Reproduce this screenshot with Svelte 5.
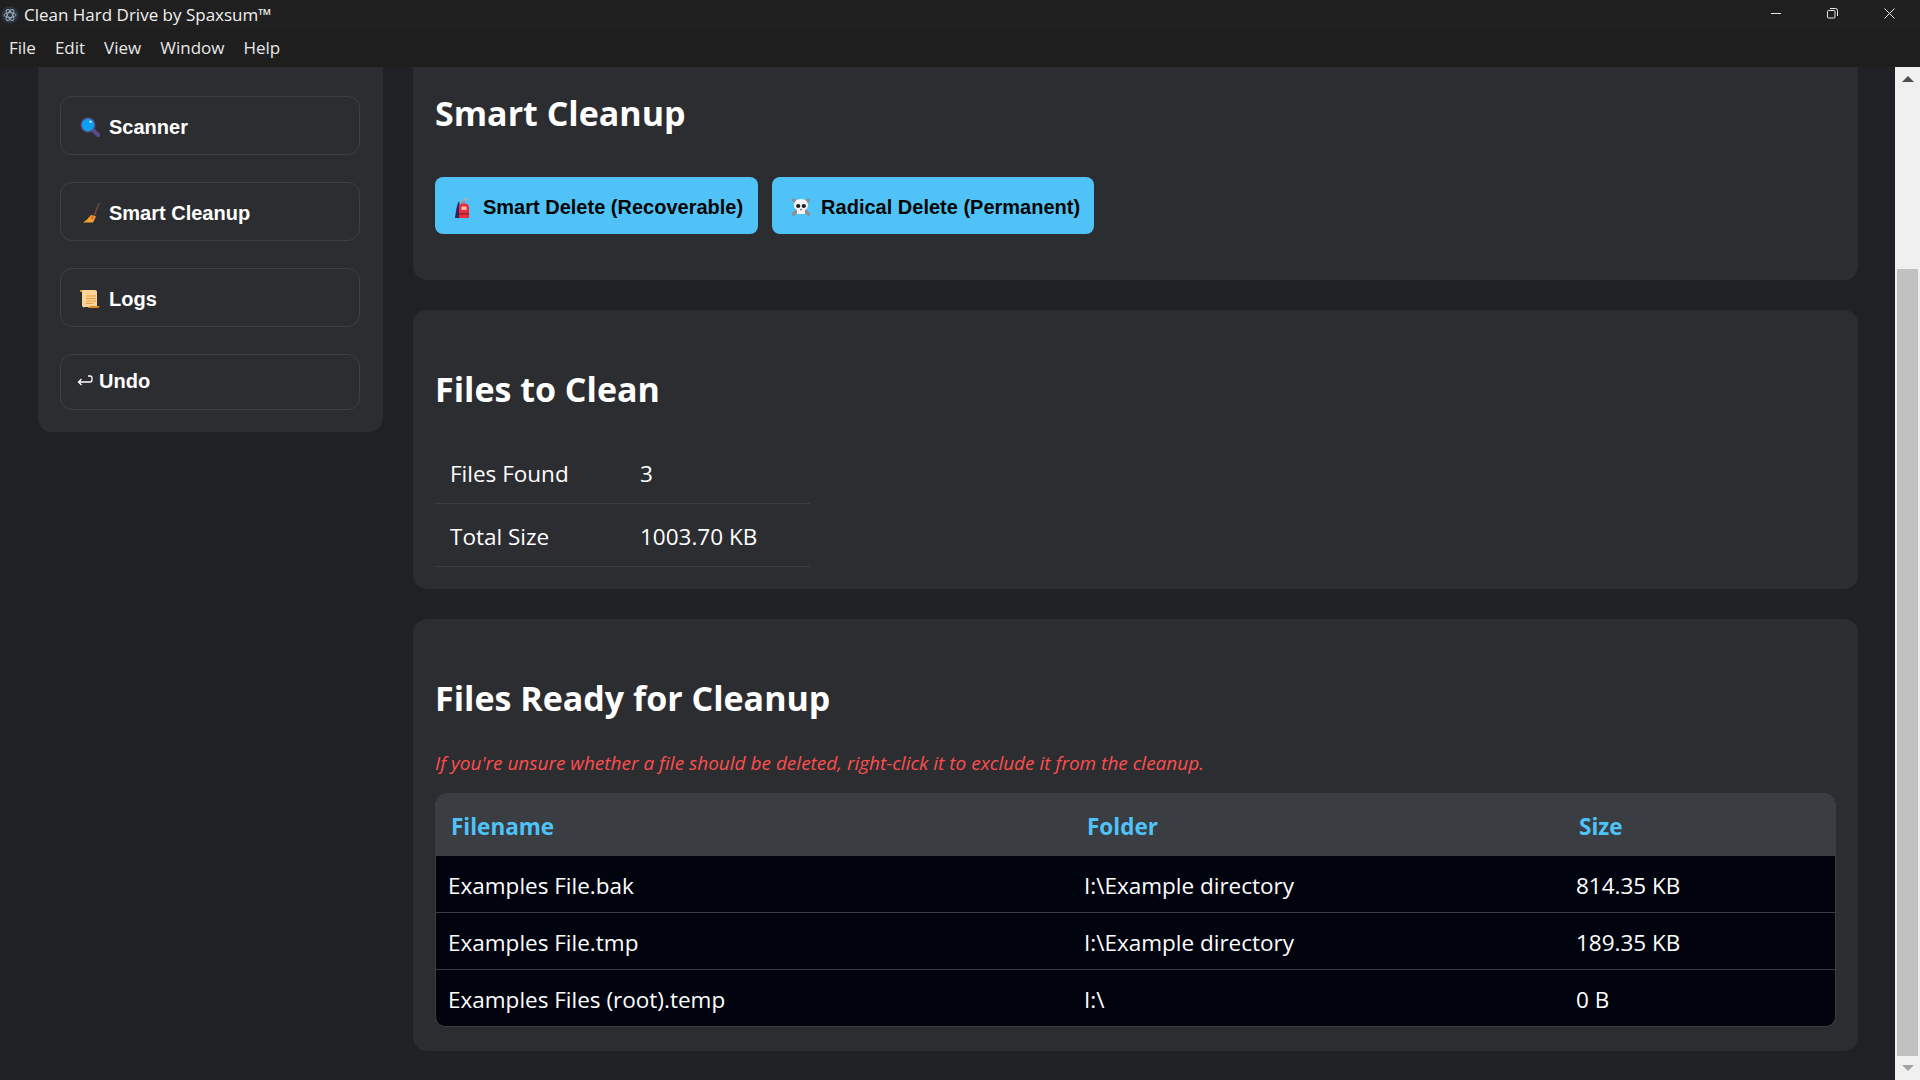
<script>
	const menus = ["File", "Edit", "View", "Window", "Help"];
	const stats = [
		{ label: "Files Found", value: "3" },
		{ label: "Total Size", value: "1003.70 KB" },
	];
	const files = [
		{ name: "Examples File.bak", folder: "I:\\Example directory", size: "814.35 KB" },
		{ name: "Examples File.tmp", folder: "I:\\Example directory", size: "189.35 KB" },
		{ name: "Examples Files (root).temp", folder: "I:\\", size: "0 B" },
	];
</script>

{#snippet scanIcon()}
	<svg class="icon" width="20" height="20" viewBox="0 0 20 20">
		<path d="M13 13l5 5" stroke="#5b4a8a" stroke-width="4" stroke-linecap="round" />
		<circle cx="8" cy="8" r="7.5" fill="#5b4a8a" />
		<circle cx="8" cy="8" r="6.2" fill="#0a9ff0" />
		<circle cx="10.5" cy="4.8" r="1.2" fill="#bfe6fb" />
	</svg>
{/snippet}

{#snippet broomIcon()}
	<svg class="icon" width="20" height="20" viewBox="0 0 20 20">
		<path d="M19 0.500L14 13" stroke="#6e4a3a" stroke-width="1.600" stroke-linecap="round" />
		<path d="M11 12l5 1.500-3 6H3l4-3z" fill="#f2a331" />
		<path d="M11.500 13l3 1-1.500 2.500-2.500-1z" fill="#e8692c" />
	</svg>
{/snippet}

{#snippet scrollIcon()}
	<svg class="icon" width="20" height="20" viewBox="0 0 20 20">
		<path d="M0 1h5v2H0z" fill="#e08b2c" />
		<path d="M2 1h13a2 2 0 0 1 2 2v15H5a2 2 0 0 1-3-2z" fill="#fcd497" />
		<path d="M8 19l2-2h10l-2 2z" fill="#e08b2c" />
		<path d="M6 7h10M6 9.5h10M6 12h10M6 14.5h7" stroke="#ee9c45" stroke-width="1" />
	</svg>
{/snippet}

{#snippet extinguisherIcon()}
	<svg class="icon" width="15" height="21" viewBox="0 0 15 21">
		<path d="M4 4C1.500 8 1 14 0 21h4.500V6z" fill="#262a63" />
		<path d="M5 3.500l8-3v2.200L7 5z" fill="#a8b3bb" />
		<rect x="6.500" y="3.500" width="3.500" height="3.500" fill="#8c969e" />
		<path d="M4 10.500A4 4 0 0 1 8 6.500h2a4 4 0 0 1 4 4V21H4z" fill="#ea2f3a" />
		<rect x="6.500" y="9.500" width="5" height="3.500" rx="0.500" fill="#f7bcc0" />
		<rect x="4" y="16" width="10" height="1.500" fill="#a81c28" />
	</svg>
{/snippet}

{#snippet skullIcon()}
	<svg class="icon" width="20" height="20" viewBox="0 0 20 20">
		<path d="M2.500 3l15 14M17.500 3l-15 14" stroke="#8f8f8f" stroke-width="3.500" stroke-linecap="round" />
		<path d="M10 2c4.500 0 7 2.800 7 6.200 0 2.300-1.200 4-3 4.800v4H6v-4c-1.800-.8-3-2.500-3-4.800C3 4.800 5.500 2 10 2z" fill="#f4f4f4" />
		<circle cx="7.200" cy="9" r="2.100" fill="#1c1c1c" />
		<circle cx="12.800" cy="9" r="2.100" fill="#1c1c1c" />
		<path d="M10 11.500l1 1.800H9z" fill="#444" />
	</svg>
{/snippet}

<div class="window">
	<header class="titlebar">
		<svg class="app-logo" width="18" height="18" viewBox="0 0 18 18">
			<circle cx="9" cy="9" r="8.500" fill="#2b3440" />
			<g fill="none" stroke="#93a7b5" stroke-width="1">
				<ellipse cx="9" cy="9" rx="6" ry="2.500" />
				<ellipse cx="9" cy="9" rx="6" ry="2.500" transform="rotate(60 9 9)" />
				<ellipse cx="9" cy="9" rx="6" ry="2.500" transform="rotate(120 9 9)" />
			</g>
		</svg>
		<span class="app-title">Clean Hard Drive by Spaxsum™</span>
		<div class="window-controls">
			<svg width="10" height="10" viewBox="0 0 10 10"><path d="M0 5.500h10" stroke="#e8e8e8" /></svg>
			<svg width="11" height="11" viewBox="0 0 11 11" fill="none" stroke="#e8e8e8">
				<rect x="0.500" y="2.500" width="7.500" height="7.500" rx="1" />
				<path d="M3 0.500h5.500a2 2 0 0 1 2 2V8" />
			</svg>
			<svg width="11" height="11" viewBox="0 0 11 11"><path d="M0.500 0.500l10 10M10.500 0.500l-10 10" stroke="#e8e8e8" /></svg>
		</div>
	</header>

	<nav class="menubar">
		{#each menus as menu}
			<span class="menu-item">{menu}</span>
		{/each}
	</nav>

	<div class="pane">
		<div class="scroller">
			<aside class="sidebar">
				<button class="nav-btn">{@render scanIcon()}<span>Scanner</span></button>
				<button class="nav-btn">{@render broomIcon()}<span>Smart Cleanup</span></button>
				<button class="nav-btn">{@render scrollIcon()}<span>Logs</span></button>
				<button class="nav-btn undo">
					<svg width="16" height="12" viewBox="0 0 16 12" fill="none" stroke="#fff" stroke-width="1.300">
						<path d="M11 1h2a2 2 0 0 1 2 2v2a2 2 0 0 1-2 2H1.500M4.500 4L1.500 7l3 3" />
					</svg>
					<span>Undo</span>
				</button>
			</aside>

			<main class="content">
				<section class="card">
					<h2>Smart Cleanup</h2>
					<div class="actions">
						<button class="action-btn">{@render extinguisherIcon()}<span>Smart Delete (Recoverable)</span></button>
						<button class="action-btn second">{@render skullIcon()}<span>Radical Delete (Permanent)</span></button>
					</div>
				</section>

				<section class="card">
					<h2>Files to Clean</h2>
					<div class="stats">
						{#each stats as stat}
							<div class="stat-row">
								<span class="stat-label">{stat.label}</span>
								<span>{stat.value}</span>
							</div>
						{/each}
					</div>
				</section>

				<section class="card">
					<h2>Files Ready for Cleanup</h2>
					<p class="note">If you're unsure whether a file should be deleted, right-click it to exclude it from the cleanup.</p>
					<table class="files">
						<colgroup>
							<col class="col-name" />
							<col class="col-folder" />
							<col />
						</colgroup>
						<thead>
							<tr>
								<th>Filename</th>
								<th>Folder</th>
								<th>Size</th>
							</tr>
						</thead>
						<tbody>
							{#each files as file}
								<tr>
									<td>{file.name}</td>
									<td>{file.folder}</td>
									<td>{file.size}</td>
								</tr>
							{/each}
						</tbody>
					</table>
				</section>
			</main>
		</div>

		<div class="scrollbar">
			<div class="arrow up"></div>
			<div class="track"><div class="thumb"></div></div>
			<div class="arrow down"></div>
		</div>
	</div>
</div>

<style>
	:global(body) {
		margin: 0;
		background: #202124;
	}

	.window {
		width: 1920px;
		height: 1080px;
		display: flex;
		flex-direction: column;
		overflow: hidden;
		font-family: "Open Sans", "Noto Sans", sans-serif;
		color: #fff;
	}

	.titlebar {
		height: 30px;
		flex-shrink: 0;
		display: flex;
		align-items: center;
		background: #202020;
		padding-left: 1px;
		font-size: 17px;
	}

	.app-logo {
		margin-right: 5px;
	}

	.app-title {
		color: #f0f0f0;
		margin-top: -2px;
	}

	.window-controls {
		margin-left: auto;
		display: flex;
		align-items: center;
		gap: 46px;
		padding-right: 25px;
		margin-top: -4px;
	}

	.window-controls svg {
		display: block;
	}

	.menubar {
		height: 35px;
		padding-bottom: 2px;
		flex-shrink: 0;
		display: flex;
		align-items: center;
		background: #1e1e1e;
		padding-left: 9px;
		gap: 19px;
		font-size: 17px;
		color: #e8e8e8;
	}

	.pane {
		flex: 1;
		min-height: 0;
		display: flex;
		overflow: hidden;
	}

	/* page is scrolled down a little, the top of the cards sits under the menu */
	.scroller {
		flex: 1;
		display: flex;
		align-items: flex-start;
		gap: 30px;
		padding: 0 37px 0 38px;
		margin-top: -33px;
	}

	.sidebar {
		width: 345px;
		flex-shrink: 0;
		box-sizing: border-box;
		padding: 62px 23px 22px 22px;
		display: flex;
		flex-direction: column;
		gap: 27px;
		background: #2c2d31;
		border-radius: 14px;
	}

	.nav-btn {
		height: 59px;
		display: flex;
		align-items: center;
		gap: 9px;
		padding: 3px 19px 0;
		background: transparent;
		border: 1px solid #3f4044;
		border-radius: 12px;
		color: #fff;
		font-family: "Liberation Sans", Arial, sans-serif;
		font-size: 20px;
		font-weight: 700;
		text-align: left;
	}

	.nav-btn.undo {
		height: 56px;
		gap: 6px;
		padding: 0 19px 2px 16px;
	}

	.content {
		flex: 1;
		min-width: 0;
		display: flex;
		flex-direction: column;
		gap: 30px;
	}

	.card {
		background: #2c2d31;
		border-radius: 14px;
		padding: 22px;
	}

	h2 {
		margin: 34px 0 29px;
		font-size: 34px;
		line-height: 46px;
		font-weight: 700;
		color: #fff;
	}

	.actions {
		display: flex;
		gap: 14px;
		margin: 41px 0 24px;
	}

	.action-btn {
		height: 57px;
		display: flex;
		align-items: center;
		gap: 13px;
		padding: 3px 15px 0 20px;
		background: #4fc3f7;
		border: none;
		border-radius: 8px;
		color: #050505;
		font-family: "Liberation Sans", Arial, sans-serif;
		font-size: 20px;
		font-weight: 700;
	}

	.action-btn.second {
		gap: 10px;
		padding-left: 19px;
		padding-right: 14px;
	}

	.stats {
		width: 375px;
	}

	.stat-row {
		height: 60px;
		padding-top: 2px;
		display: flex;
		align-items: center;
		padding-left: 15px;
		border-bottom: 1px solid #3a3d42;
		font-size: 22.5px;
	}

	.stat-label {
		width: 190px;
	}

	.note {
		margin: 0 0 17px;
		font-size: 19px;
		line-height: 26px;
		font-style: italic;
		color: #ff4d4d;
	}

	.files {
		width: 100%;
		margin-bottom: 2px;
		border-collapse: separate;
		border-spacing: 0;
		table-layout: fixed;
		background: #01040e;
		border: 1px solid #3a3d42;
		border-top: none;
		border-radius: 10px;
		overflow: hidden;
		font-size: 22.5px;
	}

	.col-name {
		width: 636px;
	}

	.col-folder {
		width: 492px;
	}

	th {
		height: 63px;
		box-sizing: border-box;
		padding: 3px 0 0 15px;
		background: #3a3d42;
		color: #4fc3f7;
		font-size: 22.5px;
		font-weight: 700;
		text-align: left;
	}

	td {
		height: 53px;
		padding: 3px 0 0 12px;
		border-bottom: 1px solid #3a3d42;
	}

	tr:last-child td {
		border-bottom: none;
	}

	.scrollbar {
		width: 25px;
		flex-shrink: 0;
		display: flex;
		flex-direction: column;
		background: #f0f0f0;
	}

	.arrow {
		height: 25px;
		display: flex;
		align-items: center;
		justify-content: center;
	}

	.arrow::before {
		content: "";
		border-left: 6px solid transparent;
		border-right: 6px solid transparent;
	}

	.arrow.up::before {
		border-bottom: 6px solid #505050;
	}

	.arrow.down::before {
		border-top: 6px solid #a3a3a3;
	}

	.track {
		flex: 1;
		padding: 177px 2px 0;
	}

	.thumb {
		height: 787px;
		background: #c1c1c1;
	}
</style>
